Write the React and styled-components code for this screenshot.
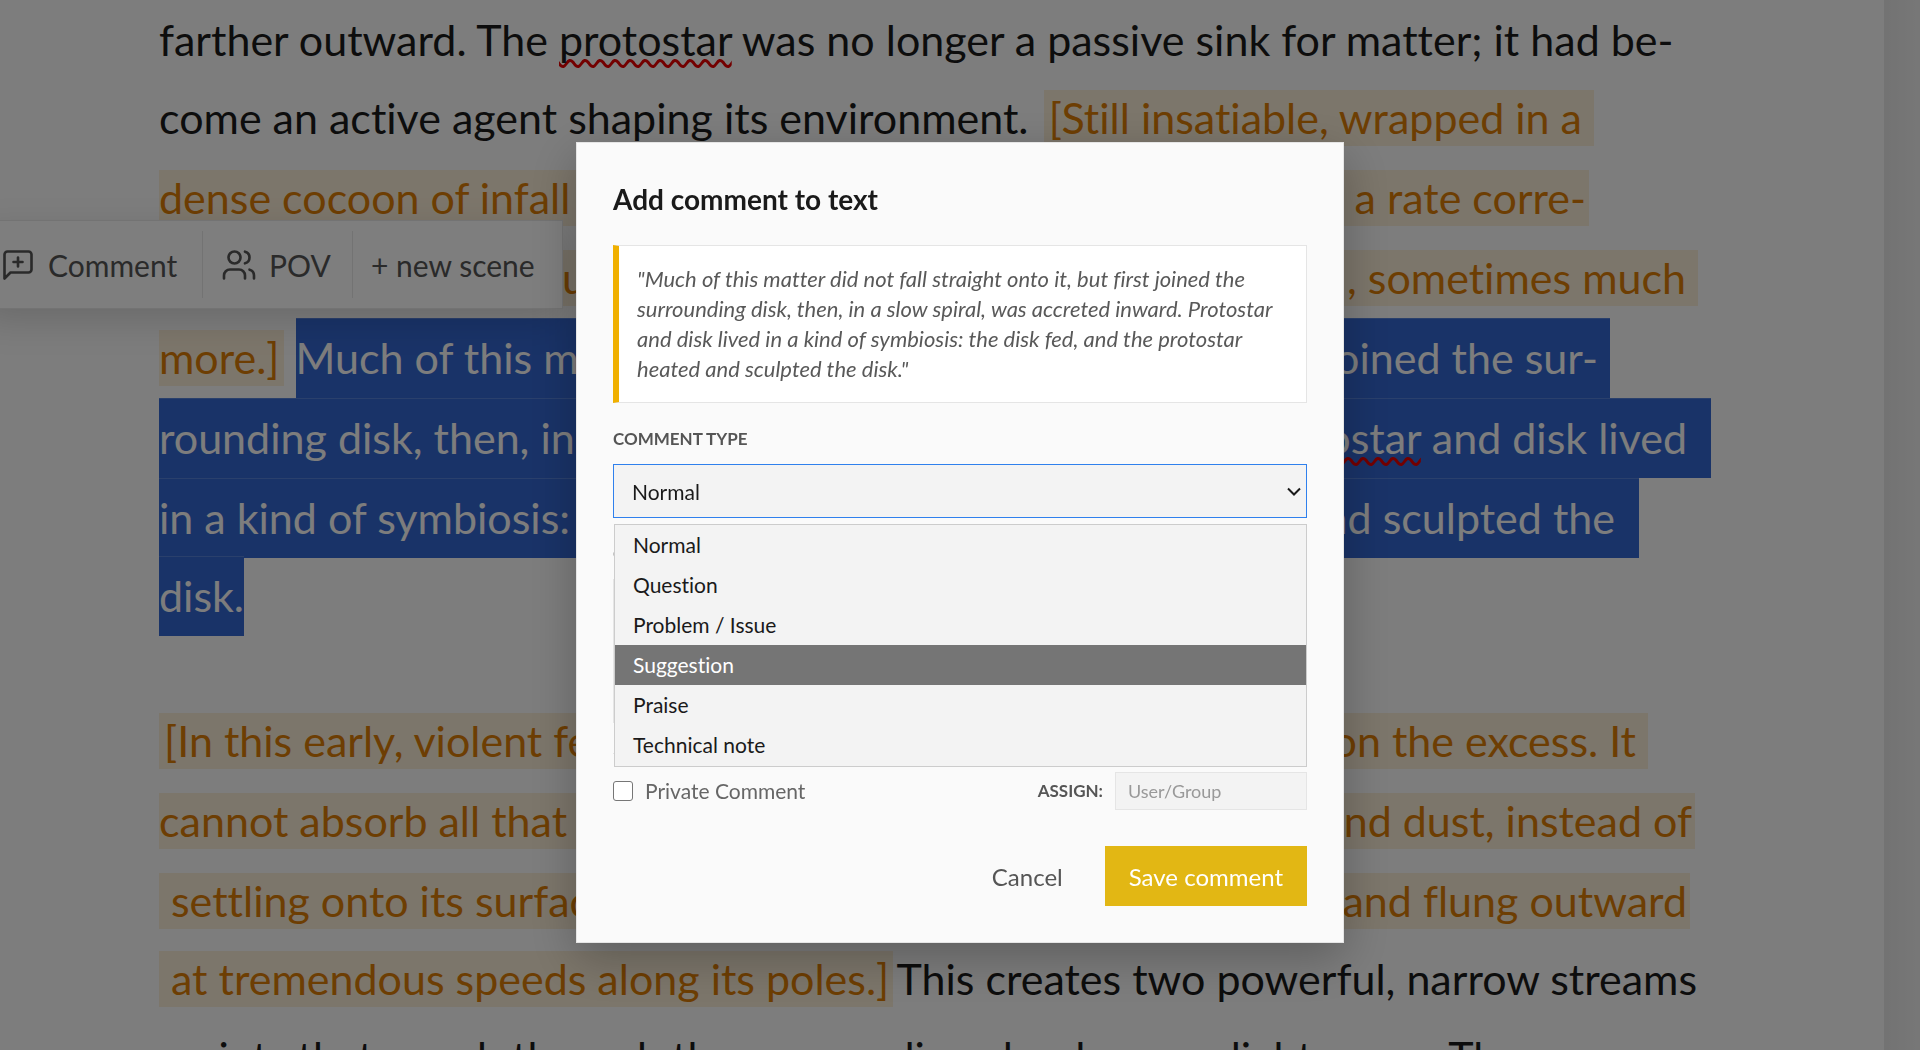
import React from 'react'
import styled, { createGlobalStyle } from 'styled-components'
import { Users } from 'lucide-react'

const GlobalStyle = createGlobalStyle`
  * {
    box-sizing: border-box;
  }

  body {
    margin: 0;
    background: #f0f0f0;
    color: #1a1a1a;
    font-family: Lato, "Liberation Sans", sans-serif;
    font-variant-ligatures: none;
    overflow: hidden;
  }

  button, input, select, textarea {
    font-family: inherit;
  }
`;

const Editor = styled.main`
  position: relative;
  height: 100vh;
  margin-right: 36px;
  padding-left: 159px;
  overflow: hidden;
  background: #fafafa;
`;

const Desk = styled.div`
  height: 100vh;
  overflow: hidden;
  background: linear-gradient(to left, #efefef, #e6e6e6 36px);
`;

const Paragraph = styled.div`
  margin-bottom: 65px;
  font-size: 43px;
  line-height: 80px;
  white-space: nowrap;
`;

const Line = styled.div`
  display: flex;
  align-items: center;
  justify-content: space-between;
  height: 80px;
  margin-bottom: ${({ $tight }) => ($tight ? '-2px' : 0)};
  width: ${({ $width }) => ($width ? `${$width}px` : 'auto')};
`;

const Mark = styled.mark`
  display: flex;
  flex: ${({ $grow }) => ($grow ? 1 : 'none')};
  justify-content: space-between;
  height: 56px;
  padding: 0 ${({ $end }) => $end || 3}px 0 ${({ $start }) => $start || 0}px;
  line-height: 56px;
  background: #f9ecd6;
  color: #db7c06;
`;

const Selected = styled.span`
  display: flex;
  flex: ${({ $grow }) => ($grow ? 1 : 'none')};
  justify-content: space-between;
  height: 80px;
  margin-left: ${({ $gap }) => $gap || 0}px;
  padding-right: ${({ $end }) => $end || 0}px;
  background: #3366d0;
  box-shadow: inset 0 1px #5580d8;
  color: #fafafa;
`;

const Misspelled = styled.span`
  text-decoration: underline wavy #e60000 3px;
  text-decoration-skip-ink: none;
  text-underline-offset: 3px;
`;

const Toolbar = styled.div`
  position: absolute;
  top: 220px;
  left: -19px;
  display: grid;
  grid-template-columns: 221px 150px 209px;
  height: 89px;
  padding: 10px 0;
  border: 1px solid #e6e6e6;
  background: #fcfcfc;
  box-shadow: 0 12px 36px rgba(0, 0, 0, 0.15);
`;

const ToolButton = styled.button`
  display: flex;
  align-items: center;
  gap: 12px;
  padding: 0 0 0 18px;
  border: 0;
  border-right: 1px solid #e6e6e6;
  background: none;
  color: #555;
  font-size: 30px;
  line-height: 36px;
  white-space: nowrap;

  &:last-child {
    border-right: 0;
  }
`;

const Overlay = styled.div`
  position: fixed;
  inset: 0;
  display: flex;
  align-items: center;
  justify-content: center;
  padding: 35px 24px 0;
  background: rgba(0, 0, 0, 0.5);
`;

const Modal = styled.form`
  width: 100%;
  max-width: 768px;
  padding: 36px;
  border: 1px solid #e5e5e5;
  background: #fafafa;
  box-shadow: 0 15px 45px rgba(0, 0, 0, 0.25);
`;

const Title = styled.h2`
  margin: 0 0 26px;
  font-size: 28px;
  font-weight: 700;
  line-height: 40px;
`;

const Quote = styled.blockquote`
  margin: 0 0 24px;
  padding: 18px;
  border: 1px solid #e5e5e5;
  border-left: 6px solid #f0b000;
  background: #fff;
  color: #595959;
  font-size: 22px;
  font-style: italic;
  line-height: 30px;
`;

const Field = styled.div`
  position: relative;
  display: flex;
  flex-direction: column;
  gap: 13px;
  margin-bottom: ${({ $last }) => ($last ? '30px' : '24px')};
`;

const Label = styled.label`
  color: #555;
  font-size: 17px;
  font-weight: 700;
  line-height: 24px;
  text-transform: uppercase;
`;

const SelectBox = styled.div`
  position: relative;
`;

const Select = styled.select`
  display: block;
  width: 100%;
  height: 54px;
  padding: 0 48px 0 18px;
  appearance: none;
  border: 1px solid #2f80ed;
  border-radius: 0;
  outline: 0;
  background: #f3f3f3;
  color: #1a1a1a;
  font-size: 21px;
`;

const Chevron = styled.svg`
  position: absolute;
  top: 23px;
  right: 6px;
  pointer-events: none;
`;

const Options = styled.ul`
  position: absolute;
  z-index: 1;
  top: 60px;
  left: 1px;
  right: 0;
  margin: 0;
  padding: 0 0 1px;
  border: 1px solid #ccc;
  background: #f3f3f3;
  list-style: none;
`;

const Option = styled.li`
  padding: 0 18px;
  background: ${({ $active }) => ($active ? '#757575' : 'transparent')};
  color: ${({ $active }) => ($active ? '#fff' : '#1a1a1a')};
  font-size: 21px;
  line-height: 40px;
`;

const TextArea = styled.textarea`
  display: block;
  width: 100%;
  height: 144px;
  border: 1px solid #e5e5e5;
  background: #f3f3f3;
  font-size: 21px;
  resize: none;
`;

const MetaRow = styled.div`
  display: flex;
  align-items: center;
  justify-content: space-between;
  margin-bottom: 36px;
  padding-top: 18px;
  border-top: 1px solid #e5e5e5;
`;

const CheckLabel = styled.label`
  display: flex;
  align-items: center;
  gap: 12px;
  color: #666;
  font-size: 21px;
  line-height: 30px;
`;

const Checkbox = styled.input`
  width: 20px;
  height: 20px;
  margin: 0;
  appearance: none;
  border: 1px solid #767676;
  border-radius: 3px;
  background: #fff;
`;

const Assign = styled.div`
  display: flex;
  align-items: center;
  gap: 12px;
`;

const AssignInput = styled.input`
  width: 192px;
  height: 38px;
  padding: 0 12px;
  border: 1px solid #e5e5e5;
  background: #f3f3f3;
  font-size: 18px;

  &::placeholder {
    color: #999;
  }
`;

const Actions = styled.div`
  display: flex;
  justify-content: flex-end;
  gap: 18px;
`;

const Button = styled.button`
  height: 60px;
  padding: 0 24px;
  border: 0;
  background: ${({ $primary }) => ($primary ? '#e2b714' : 'transparent')};
  color: ${({ $primary }) => ($primary ? '#fff' : '#555')};
  font-size: 24px;
`;

const CommentIcon = () => (
  <svg width="36" height="36" viewBox="0 0 24 24" fill="none" stroke="currentColor"
    strokeWidth="1.75" strokeLinecap="round" strokeLinejoin="round">
    <path d="M21 15a2 2 0 0 1-2 2H7l-4 4V5a2 2 0 0 1 2-2h14a2 2 0 0 1 2 2z" />
    <path d="M12 7v6M9 10h6" />
  </svg>
)

const types = ['Normal', 'Question', 'Problem / Issue', 'Suggestion', 'Praise', 'Technical note']

const Manuscript = () => (
  <>
    <Paragraph>
      <Line $tight $width={1512}>
        <span>farther outward. The <Misspelled>protostar</Misspelled> was no longer a passive sink for matter; it had be-</span>
      </Line>
      <Line $width={1435}>
        <span>come an active agent shaping its environment.</span>
        <Mark $start={5} $end={12}>[Still insatiable, wrapped in a</Mark>
      </Line>
      <Line $width={1430}>
        <Mark $grow><span>dense cocoon of infall</span><span>a rate corre-</span></Mark>
      </Line>
      <Line $width={1539}>
        <Mark $grow $start={403} $end={12}><span>u</span><span>, sometimes much</span></Mark>
      </Line>
      <Line $width={1451}>
        <Mark $end={4}>more.]</Mark>
        <Selected $grow $gap={12} $end={12}><span>Much of this matter</span><span>joined the sur-</span></Selected>
      </Line>
      <Line $width={1552}>
        <Selected $grow $end={24}>
          <span>rounding disk, then, in</span>
          <span><Misspelled>Protostar</Misspelled> and disk lived</span>
        </Selected>
      </Line>
      <Line $tight $width={1480}>
        <Selected $grow $end={24}><span>in a kind of symbiosis:</span><span>and sculpted the</span></Selected>
      </Line>
      <Line $width={85}>
        <Selected $grow>disk.</Selected>
      </Line>
    </Paragraph>
    <Paragraph>
      <Line $width={1489}>
        <Mark $grow $start={5} $end={12}><span>[In this early, violent fe</span><span>on the excess. It</span></Mark>
      </Line>
      <Line $width={1536}>
        <Mark $grow><span>cannot absorb all that</span><span>and dust, instead of</span></Mark>
      </Line>
      <Line $tight $width={1531}>
        <Mark $grow $start={12}><span>settling onto its surface</span><span>and flung outward</span></Mark>
      </Line>
      <Line $tight $width={1538}>
        <Mark $start={12} $end={4}>at tremendous speeds along its poles.]</Mark>
        <span>This creates two powerful, narrow streams</span>
      </Line>
      <Line $width={1361}>
        <span>&nbsp;points that punch through the surrounding clouds</span>
        <span>over light-years. The</span>
      </Line>
    </Paragraph>
  </>
)

const App = () => {
  return (
    <>
      <GlobalStyle />
      <Desk>
        <Editor>
          <Manuscript />
          <Toolbar>
            <ToolButton type="button"><CommentIcon />Comment</ToolButton>
            <ToolButton type="button"><Users size={36} strokeWidth={1.75} />POV</ToolButton>
            <ToolButton type="button">+ new scene</ToolButton>
          </Toolbar>
        </Editor>
      </Desk>

      <Overlay>
        <Modal role="dialog" aria-labelledby="dialog-title">
          <Title id="dialog-title">Add comment to text</Title>
          <Quote>
            "Much of this matter did not fall straight onto it, but first joined the surrounding disk,
            then, in a slow spiral, was accreted inward. Protostar and disk lived in a kind of
            symbiosis: the disk fed, and the protostar heated and sculpted the disk."
          </Quote>

          <Field>
            <Label htmlFor="type">Comment type</Label>
            <SelectBox>
              <Select id="type" defaultValue="Normal">
                {types.map((type) => <option key={type}>{type}</option>)}
              </Select>
              <Chevron width="14" height="9" viewBox="0 0 14 9" fill="none" stroke="#1a1a1a" strokeWidth="2">
                <path d="M1 1.5l6 6 6-6" />
              </Chevron>
              <Options role="listbox" aria-label="Comment type">
                {types.map((type) => (
                  <Option key={type} role="option" aria-selected={type === 'Suggestion'} $active={type === 'Suggestion'}>
                    {type}
                  </Option>
                ))}
              </Options>
            </SelectBox>
          </Field>

          <Field $last>
            <Label htmlFor="comment">Comment</Label>
            <TextArea id="comment" />
          </Field>

          <MetaRow>
            <CheckLabel><Checkbox type="checkbox" />Private Comment</CheckLabel>
            <Assign>
              <Label htmlFor="assign">Assign:</Label>
              <AssignInput id="assign" placeholder="User/Group" />
            </Assign>
          </MetaRow>

          <Actions>
            <Button type="button">Cancel</Button>
            <Button type="submit" $primary>Save comment</Button>
          </Actions>
        </Modal>
      </Overlay>
    </>
  )
}

export default App
